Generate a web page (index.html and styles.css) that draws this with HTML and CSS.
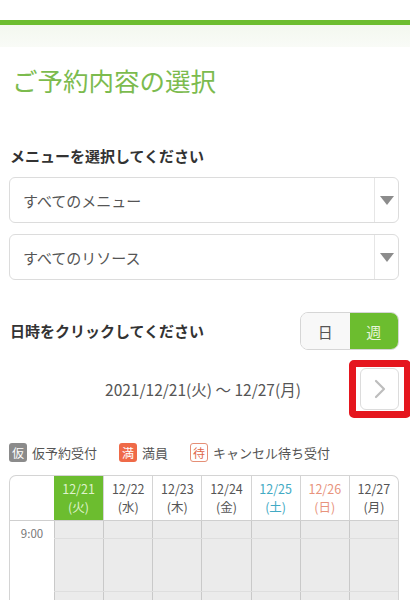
FILE: index.html
```html
<!DOCTYPE html>
<html lang="ja">
<head>
  <meta charset="UTF-8" />
  <meta name="viewport" content="width=device-width, initial-scale=1.0" />
  <title>ご予約内容の選択</title>
  <link rel="stylesheet" href="styles.css">
</head>
<body>
  <div class="topbar"></div>
  <div class="band"></div>

  <main class="page">
    <h1 class="title">ご予約内容の選択</h1>

    <h2 class="label">メニューを選択してください</h2>
    <div class="select">
      <span class="select-text">すべてのメニュー</span>
      <span class="select-arrow"></span>
    </div>
    <div class="select">
      <span class="select-text">すべてのリソース</span>
      <span class="select-arrow"></span>
    </div>

    <div class="date-head">
      <h2 class="label">日時をクリックしてください</h2>
      <div class="toggle">
        <span class="toggle-item">日</span>
        <span class="toggle-item active">週</span>
      </div>
    </div>

    <div class="range">
      <span class="range-text">2021/12/21(火) 〜 12/27(月)</span>
      <button class="next">
        <svg width="12" height="20" viewBox="0 0 12 20"><path d="M2 2 L10 10 L2 18" fill="none" stroke="#bdbdbd" stroke-width="2.2" stroke-linecap="round" stroke-linejoin="round"/></svg>
      </button>
      <span class="highlight"></span>
    </div>

    <div class="legend">
      <span class="legend-item"><span class="badge gray">仮</span>仮予約受付</span>
      <span class="legend-item"><span class="badge full">満</span>満員</span>
      <span class="legend-item"><span class="badge wait">待</span>キャンセル待ち受付</span>
    </div>

    <div class="calendar">
      <div class="cal-head">
        <div class="cell corner"></div>
        <div class="cell today">12/21<br>(火)</div>
        <div class="cell">12/22<br>(水)</div>
        <div class="cell">12/23<br>(木)</div>
        <div class="cell">12/24<br>(金)</div>
        <div class="cell sat">12/25<br>(土)</div>
        <div class="cell sun">12/26<br>(日)</div>
        <div class="cell">12/27<br>(月)</div>
      </div>
      <div class="cal-body">
        <div class="time">9:00</div>
        <div class="slots">
          <div class="slot-row short"></div>
          <div class="slot-row tall"></div>
          <div class="slot-row tall"></div>
        </div>
      </div>
    </div>
  </main>
</body>
</html>
```

FILE: styles.css
```css
/* Base */
*, *::before, *::after {
  box-sizing: border-box;
  margin: 0;
  padding: 0;
}
body {
  font-family: "Noto Sans CJK JP", "Noto Sans", sans-serif;
  color: #444;
  background-color: #fff;
  overflow: hidden;
}

/* Header strip */
.topbar {
  margin-top: 20px;
  height: 5px;
  background-color: #6cbd2f;
}
.band {
  height: 22px;
  background: linear-gradient(#f3f8ef, #f9fbf7);
}

.page {
  padding: 0 11px 0 9px;
}

.title {
  margin-top: 17px;
  padding-left: 3px;
  font-size: 25.5px;
  line-height: 32px;
  font-weight: 400;
  color: #7cbb4e;
}

.label {
  font-size: 15px;
  line-height: 24px;
  font-weight: 700;
  color: #333;
  padding-left: 1px;
}
.title + .label {
  margin-top: 48px;
  margin-bottom: 9px;
}

/* Selects */
.select {
  display: flex;
  align-items: center;
  height: 46px;
  border: 1px solid #dcdcdc;
  border-radius: 6px;
  margin-bottom: 11px;
}
.select-text {
  flex: 1;
  padding-left: 13px;
  font-size: 15px;
  color: #555;
}
.select-arrow {
  width: 24px;
  height: 100%;
  border-left: 1px solid #e6e6e6;
  display: flex;
  align-items: center;
  justify-content: center;
}
.select-arrow::after {
  content: '';
  border-left: 7px solid transparent;
  border-right: 7px solid transparent;
  border-top: 9px solid #8c8c8c;
}

/* Date header */
.date-head {
  display: flex;
  align-items: center;
  justify-content: space-between;
  margin-top: 32px;
}
.toggle {
  display: flex;
  width: 99px;
  height: 38px;
  border: 1px solid #d6d6d6;
  border-radius: 8px;
  overflow: hidden;
}
.toggle-item {
  flex: 1;
  display: flex;
  align-items: center;
  justify-content: center;
  font-size: 15px;
  color: #555;
  background-color: #f8f8f8;
}
.toggle-item.active {
  background-color: #6cbd2f;
  color: #e8f5dc;
}

/* Range */
.range {
  position: relative;
  display: flex;
  align-items: center;
  justify-content: center;
  height: 42px;
  margin-top: 18px;
}
.range-text {
  font-size: 15.5px;
  color: #555;
  margin-right: 2px;
}
.next {
  position: absolute;
  right: 0;
  top: 0;
  width: 39px;
  height: 42px;
  border: 1px solid #dcdcdc;
  border-radius: 6px;
  background-color: #fff;
  display: flex;
  align-items: center;
  justify-content: center;
}
.highlight {
  position: absolute;
  right: -12px;
  top: -8px;
  width: 62px;
  height: 58px;
  border: 7px solid #e5161e;
  border-radius: 5px;
}

/* Legend */
.legend {
  display: flex;
  align-items: center;
  gap: 22px;
  margin-top: 33px;
}
.legend-item {
  display: flex;
  align-items: center;
  gap: 5px;
  font-size: 13px;
  color: #555;
}
.badge {
  display: inline-flex;
  align-items: center;
  justify-content: center;
  width: 18px;
  height: 19px;
  border-radius: 3px;
  font-size: 12px;
  color: #fff;
}
.badge.gray {
  background-color: #8b8b8b;
}
.badge.full {
  background-color: #ef6a48;
}
.badge.wait {
  border: 1px solid #e58f76;
  color: #e0674a;
  background-color: #fff;
}

/* Calendar */
.calendar {
  margin-top: 13px;
  border: 1px solid #d4d4d4;
  border-bottom: none;
  border-radius: 7px 7px 0 0;
  overflow: hidden;
}
.cal-head {
  display: grid;
  grid-template-columns: 44px repeat(7, 1fr);
  height: 45px;
  border-bottom: 1px solid #cfcfcf;
}
.cell {
  display: flex;
  align-items: center;
  justify-content: center;
  text-align: center;
  font-size: 12.5px;
  line-height: 18px;
  color: #555;
  border-left: 1px solid #d4d4d4;
}
.cell.corner {
  border-left: none;
}
.cell.today {
  background-color: #6cbd2f;
  color: #dff2cc;
  border-left: none;
}
.cell.sat {
  color: #42aac4;
}
.cell.sun {
  color: #e8937c;
}

.cal-body {
  display: grid;
  grid-template-columns: 44px 1fr;
}
.time {
  font-size: 11.5px;
  color: #777;
  text-align: center;
  padding-top: 4px;
}
.slots {
  background-color: #ebebeb;
  background-image: repeating-linear-gradient(to right, #c9c9c9 0, #c9c9c9 1px, transparent 1px, transparent calc(100% / 7));
}
.slot-row {
  border-bottom: 1px solid #dedede;
}
.slot-row.short {
  height: 18px;
}
.slot-row.tall {
  height: 53px;
}
```
